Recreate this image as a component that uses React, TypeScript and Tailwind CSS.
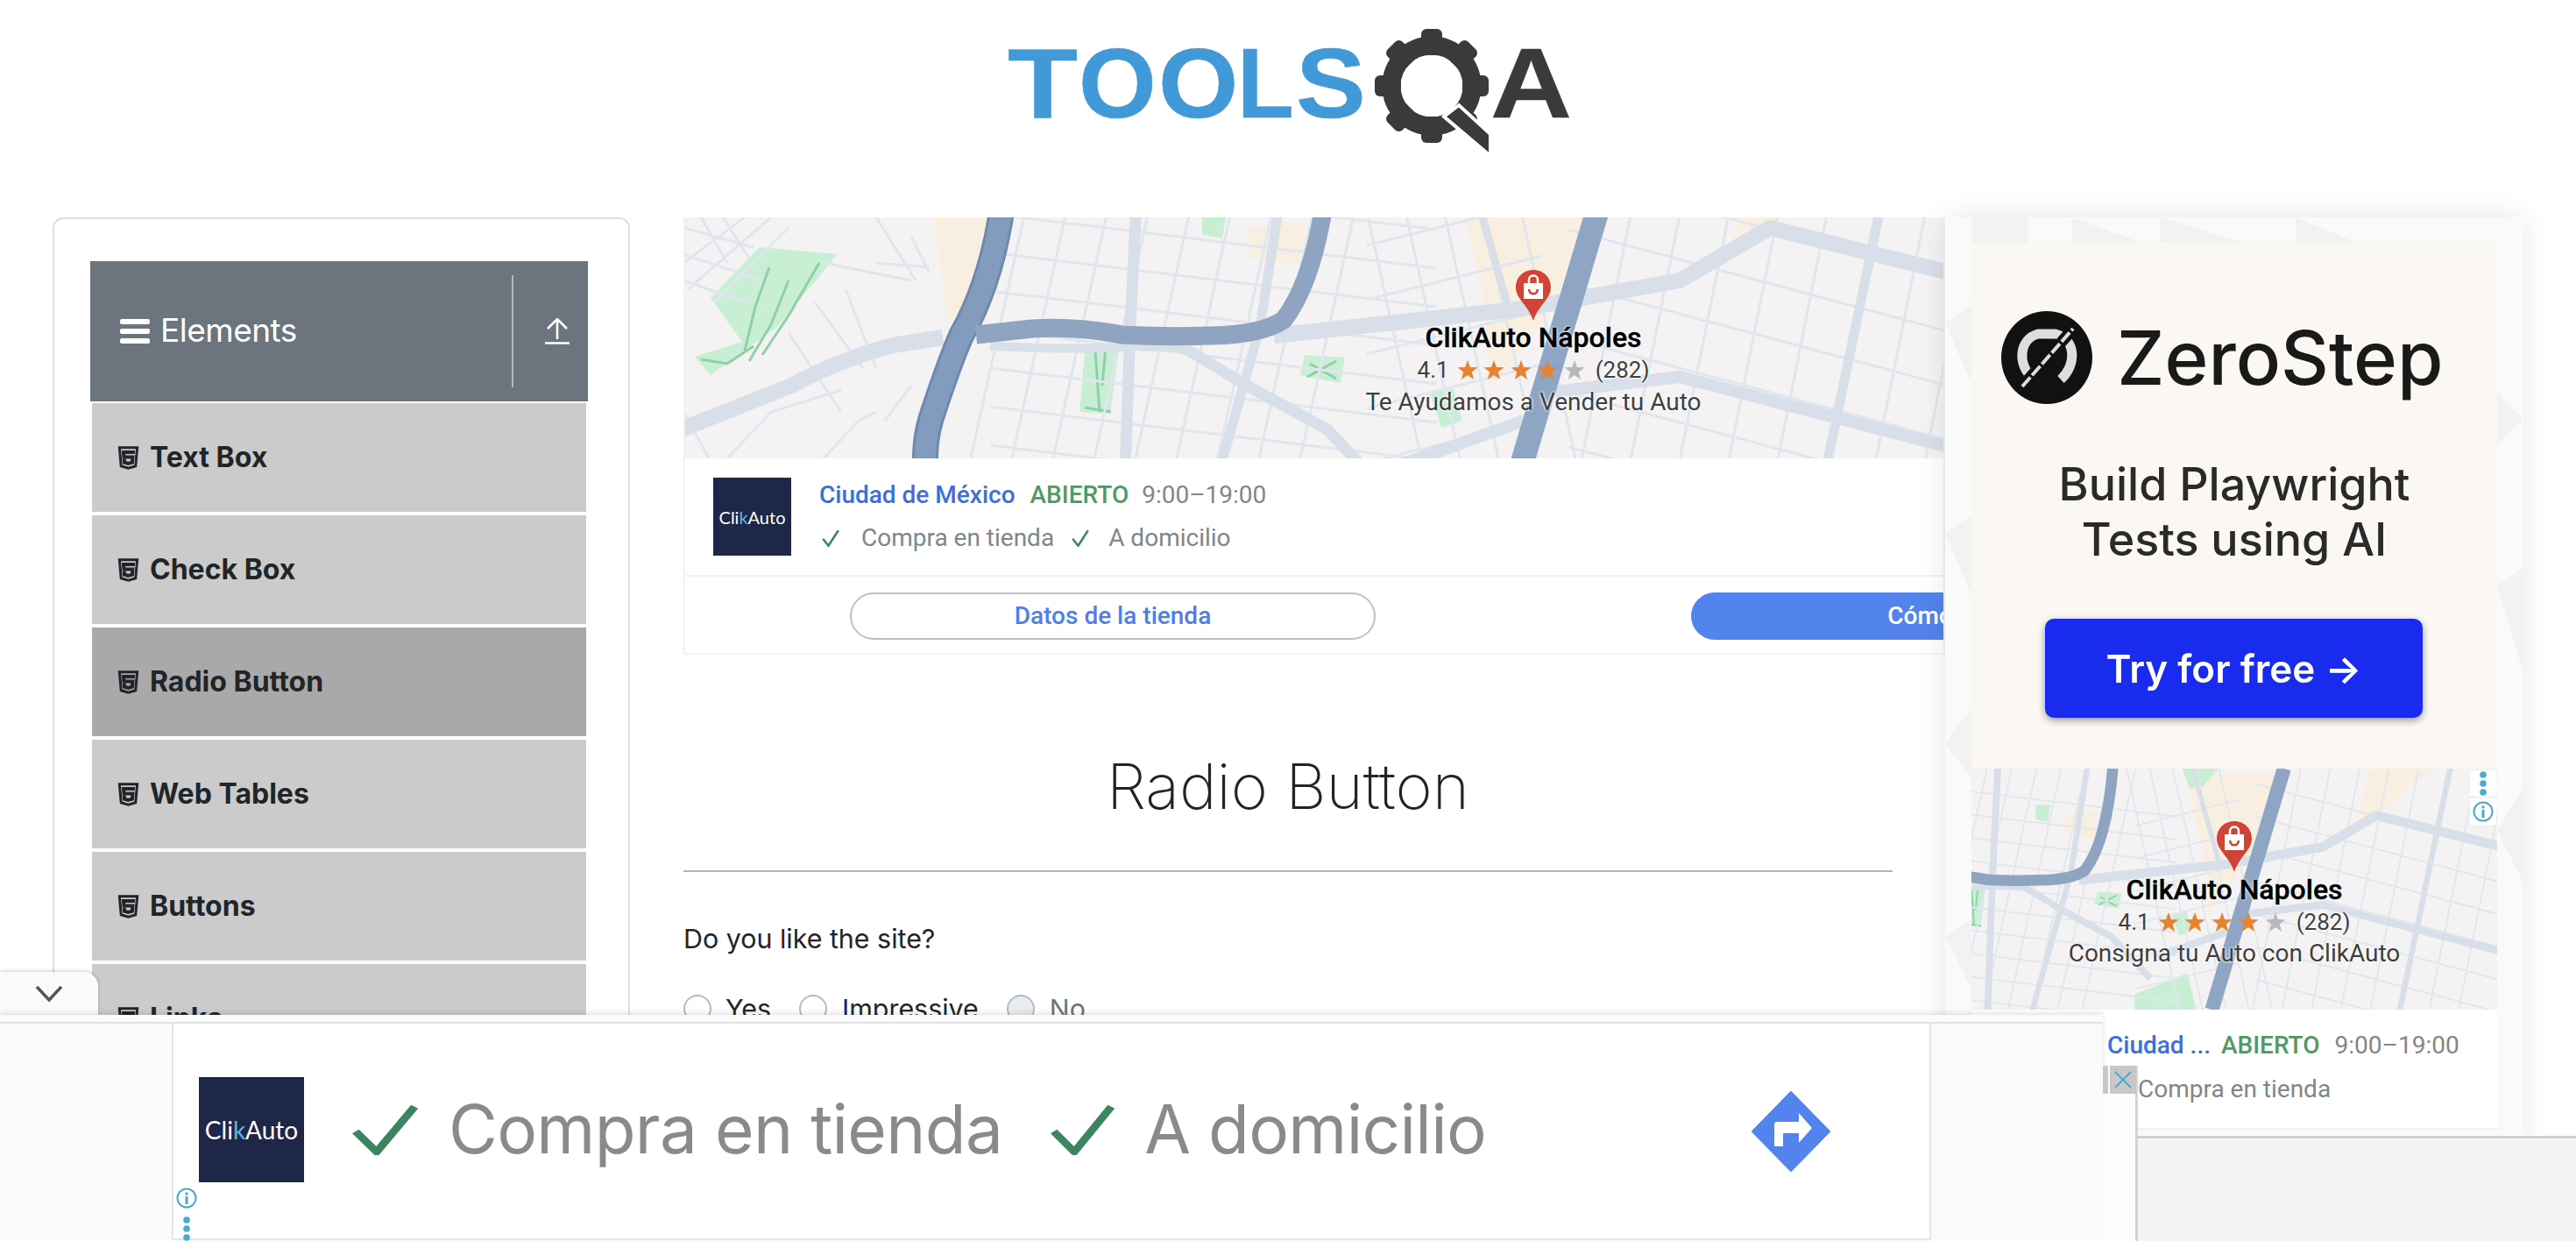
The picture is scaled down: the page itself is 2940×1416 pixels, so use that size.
import React from "react";
import { AiOutlineHtml5 } from "react-icons/ai";

const items = ["Text Box", "Check Box", "Radio Button", "Web Tables", "Buttons", "Links"];

function lines(n: number, f: (i: number) => [number, number, number, number]) {
  return Array.from({ length: n }, (_, i) => {
    const [a, b, c, d] = f(i);
    return `M${a} ${b}L${c} ${d}`;
  }).join("");
}

const thin =
  lines(9, (i) => { const x = 1150 + i * 47; return [x + 40, 150, x - 70, 650]; }) +
  lines(10, (i) => { const y = 200 + i * 44; return [1130, y, 1640, y + 62]; }) +
  lines(5, (i) => { const x = 1560 + i * 44; return [x - 20, 150, x + 90, 650]; }) +
  lines(6, (i) => { const y = 250 + i * 62; return [1560, y + 30, 1760, y - 20]; }) +
  lines(8, (i) => { const x = 1850 + i * 56; return [x + 30, 150, x - 70, 650]; }) +
  lines(7, (i) => { const y = 200 + i * 62; return [1790, y, 2260, y + 126]; }) +
  "M780 300L850 248M785 330L880 248M815 345L900 260M780 290L870 320M780 320L850 345M800 248L830 300M825 248L855 295M1000 248L1045 320M780 470L830 560M1040 270L1060 310M940 300L1040 320M930 345L985 420M900 380L960 470M830 523L880 470L960 445M1040 440L1010 480M940 523L980 480L1000 470M780 260L860 282M1000 300L1060 305M965 330L1000 420";

function MapGeometry() {
  return (
    <>
      <rect x="600" y="100" width="1800" height="600" fill="#f4f2f3" />
      <g fill="#f8efe0">
        <polygon points="1066,248 1127,248 1097,363 1081,363" />
        <polygon points="1426,260 1489,253 1484,302 1426,295" />
        <polygon points="1658,180 1830,180 1774,350 1700,447 1695,350" />
        <polygon points="2010,170 2130,170 2030,250 1980,270" />
      </g>
      <g fill="#c8eed4">
        <polygon points="867,282 956,290 887,373 811,428 793,407 847,390 811,340" />
        <polygon points="1239,392 1278,392 1267,472 1232,470" />
        <polygon points="1489,405 1535,408 1530,437 1484,428" />
        <polygon points="1372,240 1400,240 1395,272 1372,268" />
        <polygon points="1631,447 1658,440 1669,480 1645,488" />
        <polygon points="1650,170 1720,170 1690,205 1665,210" />
        <polygon points="1560,600 1660,560 1680,640 1560,640" />
      </g>
      <path
        d="M878 305L862 350L850 400M900 320L880 370L855 412M935 300L900 360L870 405M800 410L830 415L860 395M1250 400L1255 470M1262 395L1258 440M1238 465L1268 470M1495 415L1525 432M1525 412L1492 430"
        fill="none"
        stroke="#8fd0a8"
        strokeWidth="3"
      />
      <path d={thin} fill="none" stroke="#dfe6ee" strokeWidth="3" />
      <g fill="none" stroke="#d8dfe8" strokeLinejoin="round">
        <path d="M740 505L903 440Q970 405 1025 393L1076 385M1454 383L1739 352L1917 320L2020 260L2300 330" strokeWidth="18" />
        <path d="M1300 170L1290 373L1280 650" strokeWidth="13" />
        <path d="M1352 397L1423 440L1515 490L1590 570" strokeWidth="13" />
        <path d="M1470 170L1438 373L1360 650" strokeWidth="11" />
        <path d="M1600 530L1739 480M1774 447L1917 430L2300 530" strokeWidth="14" />
        <path d="M1670 170L1720 347" strokeWidth="9" />
        <path d="M2160 170L2060 650" strokeWidth="11" />
        <path d="M1130 395Q1250 400 1290 395L1352 397" strokeWidth="10" />
      </g>
      <path d="M1150 150L1142 248C1130 320 1110 360 1097 383C1085 410 1075 440 1065 470C1058 490 1056 510 1056 523L1040 650" fill="none" stroke="#6f89ae" strokeWidth="30" />
      <path d="M1150 150L1142 248C1130 320 1110 360 1097 383C1085 410 1075 440 1065 470C1058 490 1056 510 1056 523L1040 650" fill="none" stroke="#839bbc" strokeWidth="24" />
      <path d="M1114 382L1178 375Q1229 372 1280 382Q1330 385 1382 383Q1440 382 1465 365Q1510 307 1520 150" fill="none" stroke="#8fa4c1" strokeWidth="21" />
      <path d="M1844 171L1707 629" fill="none" stroke="#8fa5c4" strokeWidth="27" />
    </>
  );
}

function Pin({ className }: { className: string }) {
  return (
    <svg viewBox="0 0 40 58" className={className}>
      <path d="M20 0C8 0 0 9 0 20C0 33 14 40 20 58C26 40 40 33 40 20C40 9 32 0 20 0Z" fill="#d14334" />
      <path d="M9 15H31V33H9Z" fill="#fff" />
      <path d="M15 15V11C15 5 25 5 25 11V15" fill="none" stroke="#fff" strokeWidth="2.5" />
      <path d="M15 22C16 29 24 29 25 22" fill="none" stroke="#d14334" strokeWidth="2.5" />
    </svg>
  );
}

function Star({ gray }: { gray?: boolean }) {
  return (
    <svg viewBox="0 0 24 24" className="h-[24px] w-[24px]">
      <polygon points="12,1 15,9 23.5,9.3 16.8,14.5 19.2,23 12,18 4.8,23 7.2,14.5 0.5,9.3 9,9" fill={gray ? "#b9b9b9" : "#e8822e"} />
    </svg>
  );
}

function Rating() {
  return (
    <div className="mt-[1px] flex items-center text-[26px] leading-[32px] text-[#3c4043] [text-shadow:0_0_3px_#fff,0_0_3px_#fff]">
      <span>4.1</span>
      <div className="ml-[9px] flex gap-[6.5px]">
        <Star />
        <Star />
        <Star />
        <Star />
        <Star gray />
      </div>
      <span className="ml-[12px]">(282)</span>
    </div>
  );
}

function ClikLogo({ big }: { big?: boolean }) {
  return (
    <div className={big ? "flex h-[120px] w-[120px] shrink-0 items-center justify-center bg-[#1e2748] font-['Lato',sans-serif] text-[28px] font-normal tracking-normal text-white" : "flex h-[89px] w-[89px] shrink-0 items-center justify-center bg-[#1e2748] font-['Lato',sans-serif] text-[20px] font-normal text-white"}>
      <span>
        Cli<span className="text-[#5fb7e5]">k</span>Auto
      </span>
    </div>
  );
}

function Check({ className }: { className: string }) {
  return (
    <svg viewBox="0 0 24 24" preserveAspectRatio="none" className={className}>
      <path d="M1.5 13L9 22.5L22.5 1.5" fill="none" stroke="#3b8560" strokeWidth="3" />
    </svg>
  );
}

function Logo() {
  const teeth = [0, 45, 90, 135, 180, 225, 270, 315];
  const blue = "#4299d8";
  return (
    <svg viewBox="1140 30 660 160" className="h-[160px] w-[660px]">
      <g fontFamily="'Liberation Sans',sans-serif" fontWeight="700" fontSize="114" fill={blue} stroke={blue} strokeWidth="0.5">
        <text transform="translate(1150 134) scale(1.15 1)">T</text>
        <text transform="translate(1231 134) scale(1 1)">O</text>
        <text transform="translate(1322 134) scale(1.03 1)">O</text>
        <text transform="translate(1412 134) scale(0.93 1)">L</text>
        <text transform="translate(1479 134) scale(1.05 1)">S</text>
        <text transform="translate(1701 134) scale(1.13 1)" fill="#3a3a3a" stroke="#3a3a3a">A</text>
      </g>
      <g fill="#3a3a3a">
        {teeth.map((a) => (
          <rect key={a} x="1622" y="33" width="24" height="30" rx="6" transform={`rotate(${a} 1634 98)`} />
        ))}
      </g>
      <circle cx="1634" cy="98" r="46" fill="none" stroke="#3a3a3a" strokeWidth="21" />
      <polygon points="1648,133 1665,120 1701,153 1701,178" fill="#3a3a3a" stroke="#fff" strokeWidth="4" />
    </svg>
  );
}

function Dots() {
  return (
    <svg viewBox="0 0 10 30" className="h-[30px] w-[10px]">
      <circle cx="5" cy="5" r="3.8" fill="#49a9cf" />
      <circle cx="5" cy="15" r="3.8" fill="#49a9cf" />
      <circle cx="5" cy="25" r="3.8" fill="#49a9cf" />
    </svg>
  );
}

function Info() {
  return (
    <svg viewBox="0 0 24 24" className="h-[24px] w-[24px]">
      <circle cx="12" cy="12" r="10.5" fill="none" stroke="#49a9cf" strokeWidth="2" />
      <circle cx="12" cy="7" r="1.7" fill="#49a9cf" />
      <rect x="10.5" y="10" width="3" height="9" fill="#49a9cf" />
    </svg>
  );
}

function Sidebar() {
  return (
    <aside className="h-[1200px] w-[659px] shrink-0 overflow-hidden rounded-xl border-2 border-[#dfdfdf] pl-[41px] pt-[48px]">
      <div className="flex h-[160px] w-[568px] items-center bg-[#6c757d] text-white">
        <svg viewBox="0 0 34 28" className="ml-[34px] h-[28px] w-[34px]">
          <rect y="0" width="34" height="6" rx="2" fill="#fff" />
          <rect y="11" width="34" height="6" rx="2" fill="#fff" />
          <rect y="22" width="34" height="6" rx="2" fill="#fff" />
        </svg>
        <span className="mb-[3px] ml-[12px] text-[37px] font-normal leading-none tracking-[-0.5px]">Elements</span>
        <div className="ml-auto h-[128px] w-[2px] bg-[#b4b8bc]" />
        <svg viewBox="0 0 30 30" className="ml-[35px] mr-[20px] h-[30px] w-[30px]">
          <path d="M15 24V2M4 12L15 1L26 12M1 28.5H29" fill="none" stroke="#fff" strokeWidth="2.6" />
        </svg>
      </div>
      <ul className="ml-[2px] mt-[2px] flex w-[564px] flex-col gap-[4px]">
        {items.map((t) => (
          <li key={t} className={t === "Radio Button" ? "flex h-[124px] items-center bg-[#a9a9a9] pl-[26px] text-[32px] font-bold text-[#212529]" : "flex h-[124px] items-center bg-[#cbcbcb] pl-[26px] text-[32px] font-bold text-[#212529]"}>
            <AiOutlineHtml5 className="h-[31px] w-[31px]" stroke="currentColor" strokeWidth={40} />
            <span className="ml-[9px]">{t}</span>
          </li>
        ))}
      </ul>
    </aside>
  );
}

function TopAd() {
  return (
    <div className="h-[499px] w-[1440px] overflow-hidden border-2 border-t-0 border-[#f2f2f2] font-['Roboto',sans-serif]">
      <div className="relative -ml-[2px] h-[275px] w-[1440px]">
        <svg viewBox="780 248 1440 275" className="h-[275px] w-[1440px]">
          <MapGeometry />
        </svg>
        <div className="absolute left-[720px] top-[60px] flex w-[500px] flex-col items-center">
          <Pin className="h-[58px] w-[40px]" />
          <div className="-mt-[1px] text-[32px] font-medium leading-[40px] text-black [-webkit-text-stroke:0.4px_black] [text-shadow:0_0_3px_#fff,0_0_3px_#fff]">ClikAuto Nápoles</div>
          <Rating />
          <div className="mt-[3px] text-[28px] leading-[36px] text-[#3c4043] [text-shadow:0_0_3px_#fff,0_0_3px_#fff]">Te Ayudamos a Vender tu Auto</div>
        </div>
      </div>
      <div className="flex h-[135px] items-center border-b-2 border-[#f2f2f2] pl-[32px]">
        <ClikLogo />
        <div className="ml-[32px]">
          <div className="flex text-[28px] leading-[38px]">
            <span className="font-medium text-[#3b6fe0]">Ciudad de México</span>
            <span className="ml-[17px] font-medium text-[#4f9a62]">ABIERTO</span>
            <span className="ml-[15px] text-[#80868b]">9:00–19:00</span>
          </div>
          <div className="mt-[11px] flex items-center text-[28px] leading-[38px] text-[#80868b]">
            <Check className="ml-[3px] h-[20px] w-[20px]" />
            <span className="ml-[25px]">Compra en tienda</span>
            <Check className="ml-[20px] h-[20px] w-[20px]" />
            <span className="ml-[22px]">A domicilio</span>
          </div>
        </div>
      </div>
      <div className="flex pl-[188px] pt-[18px]">
        <div className="flex h-[54px] w-[600px] shrink-0 items-center justify-center rounded-full border-2 border-[#bdc1c6] text-[28px] font-medium text-[#4e7fe9]">Datos de la tienda</div>
        <div className="ml-[360px] flex h-[54px] w-[600px] shrink-0 items-center justify-center rounded-full bg-[#5383ec] text-[28px] font-medium text-white">Cómo llegar</div>
      </div>
    </div>
  );
}

function RightAd() {
  return (
    <div className="absolute left-[2220px] top-[248px] h-[1060px] w-[660px] bg-[#f9fafa] px-[30px] pt-[29px] shadow-[0_0_30px_rgba(0,0,0,0.1)]">
      <svg viewBox="0 0 660 1060" className="absolute left-0 top-0 h-[1060px] w-[660px]">
        <g fill="#f1f2f3">
          <polygon points="30,0 95,0 95,29 30,29" />
          <polygon points="145,0 225,29 145,29" />
          <polygon points="245,0 340,29 245,29" />
          <polygon points="400,0 470,29 400,29" />
          <polygon points="0,120 30,100 30,190" />
          <polygon points="0,360 30,340 30,430" />
          <polygon points="0,600 30,560 30,640" />
          <polygon points="630,200 660,230 630,260" />
          <polygon points="630,420 660,400 660,520" />
          <polygon points="630,700 660,650 660,760" />
          <polygon points="0,820 30,800 30,880" />
        </g>
      </svg>
      <div className="relative h-[600px] w-[600px] bg-[#fbf8f4] pt-[78px] text-[#1a1a1a]">
        <div className="flex items-center pl-[34px] blur-[0.5px]">
          <svg viewBox="0 0 104 106" className="h-[106px] w-[104px]">
            <ellipse cx="52" cy="53" rx="52" ry="53" fill="#111" />
            <path d="M36 76C18 62 20 32 42 26L62 26C86 32 86 62 68 78" fill="none" stroke="#ddd" strokeWidth="11" />
            <path d="M22 88L84 18" stroke="#111" strokeWidth="13" />
            <path d="M24 86L82 20" stroke="#ddd" strokeWidth="4" strokeDasharray="14 3" />
          </svg>
          <span className="ml-[28px] text-[85px] font-medium leading-none">ZeroStep</span>
        </div>
        <div className="mt-[60px] text-center text-[52px] font-medium leading-[63px] text-[#2a2a2a] blur-[0.5px]">
          Build Playwright
          <br />
          Tests using AI
        </div>
        <div className="ml-[84px] mt-[59px] flex h-[113px] w-[431px] items-center justify-center rounded-[10px] bg-[#1a2bf0] text-[44px] font-semibold text-white shadow-[0_3px_8px_rgba(0,0,0,0.4)] blur-[0.5px]">Try for free →</div>
      </div>
      <div className="relative h-[275px] w-[600px] font-['Roboto',sans-serif]">
        <svg viewBox="1250 171 999 458" className="h-[275px] w-[600px]">
          <MapGeometry />
        </svg>
        <div className="absolute left-[50px] top-[60px] flex w-[500px] flex-col items-center">
          <Pin className="h-[58px] w-[40px]" />
          <div className="text-[32px] font-medium leading-[40px] text-black [-webkit-text-stroke:0.4px_black] [text-shadow:0_0_3px_#fff,0_0_3px_#fff]">ClikAuto Nápoles</div>
          <Rating />
          <div className="mt-[2px] text-[28px] leading-[36px] text-[#3c4043] [text-shadow:0_0_3px_#fff,0_0_3px_#fff]">Consigna tu Auto con ClikAuto</div>
        </div>
        <div className="absolute right-[1px] top-[2px] flex h-[29px] w-[30px] items-center justify-center bg-white"><Dots /></div>
        <div className="absolute right-[1px] top-[34px] flex h-[30px] w-[30px] items-center justify-center bg-white"><Info /></div>
      </div>
      <div className="relative h-[137px] w-[600px] border-b-2 border-[#f0f0f0] bg-white font-['Roboto',sans-serif] text-[28px] leading-[38px]">
        <div className="flex pl-[155px] pt-[22px]">
          <span className="font-medium text-[#3b6fe0]">Ciudad ...</span>
          <span className="ml-[12px] font-medium text-[#4f9a62]">ABIERTO</span>
          <span className="ml-[17px] text-[#80868b]">9:00–19:00</span>
        </div>
        <div className="pl-[190px] pt-[12px] text-[#80868b]">Compra en tienda</div>
      </div>
    </div>
  );
}

function BottomBar() {
  return (
    <>
      <div className="absolute left-0 top-[1109px] flex h-[50px] w-[112px] items-center justify-center rounded-tr-2xl bg-[#fafafa] shadow-[0_-1px_4px_rgba(0,0,0,0.2)]">
        <svg viewBox="0 0 32 20" className="h-[20px] w-[32px]">
          <path d="M2 2L16 17L30 2" fill="none" stroke="#555" strokeWidth="3.5" />
        </svg>
      </div>
      <div className="absolute left-0 top-[1158px] h-[258px] w-[2400px] bg-[#fafafa] shadow-[0_-2px_6px_rgba(0,0,0,0.12)]">
        <div className="h-[10px] w-[2400px] border-b-2 border-[#e2e2e2]" />
        <div className="flex h-[248px] w-[2400px] pl-[196px]">
          <div className="relative flex h-[247px] w-[2008px] items-center border-2 border-t-0 border-[#e6e6e6] bg-white pb-[4px] pl-[29px] font-['Inter',sans-serif] text-[76.5px] tracking-[-0.7px] text-[#8a8a8a]">
            <ClikLogo big />
            <Check className="ml-[54px] h-[59px] w-[77px] shrink-0" />
            <span className="ml-[34px]">Compra en tienda</span>
            <Check className="ml-[54px] h-[59px] w-[75px] shrink-0" />
            <span className="ml-[33px]">A domicilio</span>
            <svg viewBox="0 0 92 92" className="absolute left-[1800px] top-[77px] h-[92px] w-[92px]">
              <path d="M46 1L90 46L46 91L2 46Z" fill="#5383ec" stroke="#5383ec" strokeWidth="2" strokeLinejoin="round" />
              <path d="M27 63V38Q27 35 30 35H55V25L70 42L55 59V48H37V63Z" fill="#fff" />
            </svg>
            <div className="absolute left-[3px] top-[187px] flex flex-col items-center gap-[8px]">
              <Info />
              <Dots />
            </div>
          </div>
        </div>
      </div>
      <div className="absolute left-[2400px] top-[1216px] h-[200px] w-[40px] border-r-[3px] border-[#d4d4d4] bg-[#fcfcfc]">
        <div className="flex h-[32px] w-[38px]">
          <div className="h-[32px] w-[6px] bg-[#c8c8c8]" />
          <div className="ml-[2px] flex h-[32px] w-[30px] items-center justify-center bg-[#c8c8c8]">
            <svg viewBox="0 0 20 20" className="h-[20px] w-[20px]">
              <path d="M1 1L19 19M19 1L1 19" stroke="#49a9cf" strokeWidth="2" />
            </svg>
          </div>
        </div>
      </div>
      <div className="absolute left-[2440px] top-[1296px] h-[120px] w-[500px] border-t-[3px] border-[#d0d0d0] bg-[#f4f4f4]" />
    </>
  );
}

export default function App() {
  return (
    <div className="relative h-[1416px] w-[2940px] overflow-hidden bg-white font-['Inter',sans-serif] text-[#212529]">
      <header className="flex h-[248px] justify-center pt-[30px]">
        <Logo />
      </header>
      <main className="flex pl-[60px]">
        <Sidebar />
        <section className="ml-[61px] w-[1380px]">
          <TopAd />
          <h1 className="mt-[110px] text-center text-[72px] font-extralight leading-[80px]">Radio Button</h1>
          <div className="mt-[56px] h-[2px] bg-[#b5b5b5]" />
          <p className="mt-[56px] text-[30.4px] leading-[40px]">Do you like the site?</p>
          <div className="mt-[40px] flex items-center text-[30.4px] leading-[40px]">
            <span className="h-[32px] w-[32px] rounded-full border-2 border-[#b3bac5]" />
            <span className="ml-[16px]">Yes</span>
            <span className="ml-[32px] h-[32px] w-[32px] rounded-full border-2 border-[#b3bac5]" />
            <span className="ml-[17px]">Impressive</span>
            <span className="ml-[32px] h-[32px] w-[32px] rounded-full border-2 border-[#b3bac5] bg-[#e9ecef]" />
            <span className="ml-[17px] text-[#6c757d]">No</span>
          </div>
        </section>
      </main>
      <RightAd />
      <BottomBar />
    </div>
  );
}
